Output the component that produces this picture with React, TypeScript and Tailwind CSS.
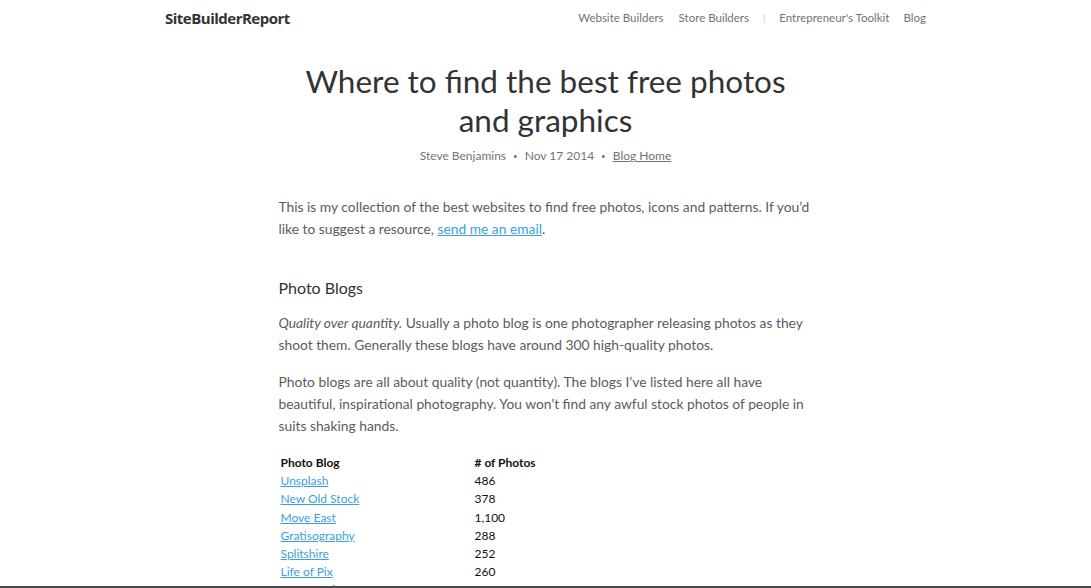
const photoBlogs = [
  { name: "Unsplash", count: "486" },
  { name: "New Old Stock", count: "378" },
  { name: "Move East", count: "1,100" },
  { name: "Gratisography", count: "288" },
  { name: "Splitshire", count: "252" },
  { name: "Life of Pix", count: "260" },
  { name: "Jay Mantri", count: "745" },
  { name: "Picjumbo", count: "900" },
];

function Header() {
  return (
    <header className="flex items-center justify-between px-[165px] pt-[4px] h-[32px]">
      <a className="text-[15px] font-bold tracking-[-0.5px] text-[#333] font-['Open_Sans',sans-serif]">
        SiteBuilderReport
      </a>
      <nav className="flex items-center text-[11.5px] text-[#6f7479] font-['Lato',sans-serif]">
        <a className="mr-[15px]">Website Builders</a>
        <a>Store Builders</a>
        <span className="mx-[14px] text-[9px] text-[#bbb]">|</span>
        <a className="mr-[14px]">Entrepreneur's Toolkit</a>
        <a>Blog</a>
      </nav>
    </header>
  );
}

export default function App() {
  return (
    <div className="h-[588px] overflow-hidden bg-white font-['Lato',sans-serif]">
      <Header />
      <div className="text-center pt-[30px]">
        <h1 className="text-[31.5px] leading-[39px] text-[#333]">
          Where to find the best free photos
          <br />
          and graphics
        </h1>
        <div className="mt-[7px] text-[12px] text-[#6f7479] flex justify-center items-center gap-[7px]">
          <span>Steve Benjamins</span>
          <span className="text-[8px]">•</span>
          <span>Nov 17 2014</span>
          <span className="text-[8px]">•</span>
          <a className="underline">Blog Home</a>
        </div>
      </div>

      <main className="w-[534px] mx-auto pt-[31px] text-[13.8px] leading-[22px] text-[#585d61]">
        <p>
          This is my collection of the best websites to find free photos, icons and patterns. If you’d
          like to suggest a resource,{" "}
          <a className="text-[#3a9fe0] underline">send me an email</a>.
        </p>

        <h2 className="mt-[37px] text-[16px] leading-[22px] text-[#333]">Photo Blogs</h2>

        <p className="mt-[13px]">
          <em>Quality over quantity.</em> Usually a photo blog is one photographer releasing photos as they
          shoot them. Generally these blogs have around 300 high-quality photos.
        </p>
        <p className="mt-[15px]">
          Photo blogs are all about quality (not quantity). The blogs I’ve listed here all have
          beautiful, inspirational photography. You won’t find any awful stock photos of people in
          suits shaking hands.
        </p>

        <table className="mt-[17px] text-[12px] leading-[18.2px] text-[#111] ml-[2px]">
          <thead>
            <tr>
              <th className="text-left font-bold w-[194px]">Photo Blog</th>
              <th className="text-left font-bold">#&nbsp;of Photos</th>
            </tr>
          </thead>
          <tbody>
            {photoBlogs.map((b) => (
              <tr key={b.name}>
                <td>
                  <a className="text-[#3a9fe0] underline">{b.name}</a>
                </td>
                <td>{b.count}</td>
              </tr>
            ))}
          </tbody>
        </table>
      </main>
      <div className="fixed bottom-0 left-0 right-0 h-[2px] bg-[#4a4a4a]" />
    </div>
  );
}
